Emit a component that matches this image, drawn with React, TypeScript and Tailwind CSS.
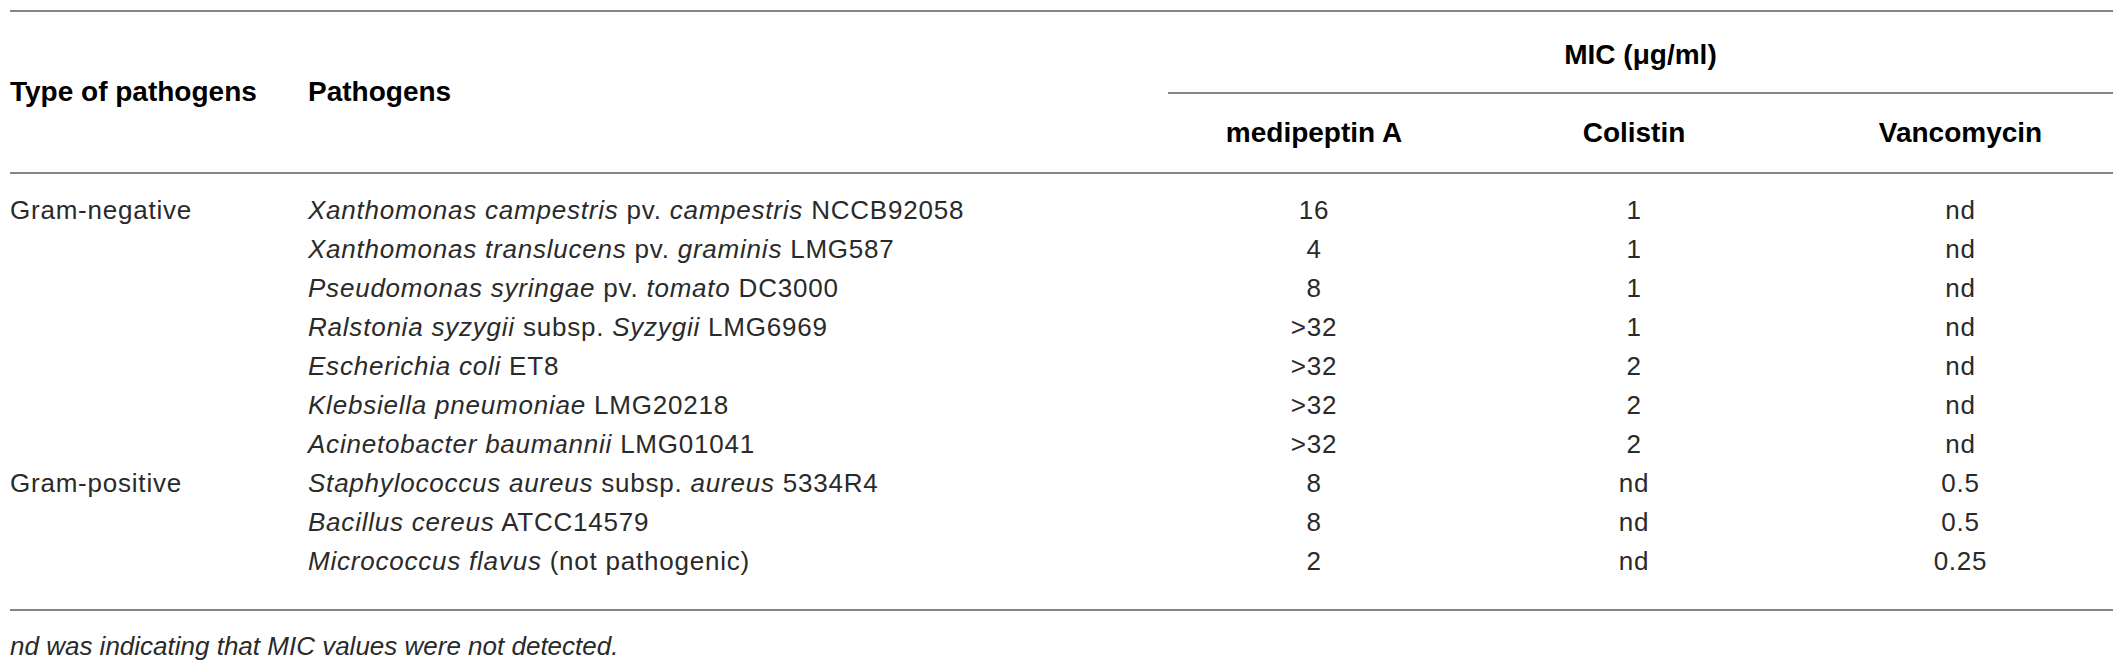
import React from 'react';

type Part = { t: string; i?: boolean };

const rows: { type?: string; name: Part[]; med: string; col: string; van: string }[] = [
  { type: 'Gram-negative', name: [{ t: 'Xanthomonas campestris', i: true }, { t: ' pv. ' }, { t: 'campestris', i: true }, { t: ' NCCB92058' }], med: '16', col: '1', van: 'nd' },
  { name: [{ t: 'Xanthomonas translucens', i: true }, { t: ' pv. ' }, { t: 'graminis', i: true }, { t: ' LMG587' }], med: '4', col: '1', van: 'nd' },
  { name: [{ t: 'Pseudomonas syringae', i: true }, { t: ' pv. ' }, { t: 'tomato', i: true }, { t: ' DC3000' }], med: '8', col: '1', van: 'nd' },
  { name: [{ t: 'Ralstonia syzygii', i: true }, { t: ' subsp. ' }, { t: 'Syzygii', i: true }, { t: ' LMG6969' }], med: '>32', col: '1', van: 'nd' },
  { name: [{ t: 'Escherichia coli', i: true }, { t: ' ET8' }], med: '>32', col: '2', van: 'nd' },
  { name: [{ t: 'Klebsiella pneumoniae', i: true }, { t: ' LMG20218' }], med: '>32', col: '2', van: 'nd' },
  { name: [{ t: 'Acinetobacter baumannii', i: true }, { t: ' LMG01041' }], med: '>32', col: '2', van: 'nd' },
  { type: 'Gram-positive', name: [{ t: 'Staphylococcus aureus', i: true }, { t: ' subsp. ' }, { t: 'aureus', i: true }, { t: ' 5334R4' }], med: '8', col: 'nd', van: '0.5' },
  { name: [{ t: 'Bacillus cereus', i: true }, { t: ' ATCC14579' }], med: '8', col: 'nd', van: '0.5' },
  { name: [{ t: 'Micrococcus flavus', i: true }, { t: ' (not pathogenic)' }], med: '2', col: 'nd', van: '0.25' },
];

export default function App() {
  return (
    <div className="w-[2126px] h-[668px] bg-white pl-[10px] pr-[13px] pt-[10px] text-[#2a2a2a] font-['Liberation_Sans',Arial,sans-serif]">
      <table className="w-full border-collapse text-[26px] leading-[30px] tracking-[0.03em]">
        <colgroup>
          <col className="w-[298px]" />
          <col className="w-[860px]" />
          <col className="w-[292px]" />
          <col className="w-[348px]" />
          <col className="w-[305px]" />
        </colgroup>
        <thead className="text-[28px] text-black tracking-normal">
          <tr className="h-[82px] border-t-2 border-[#858585]">
            <th rowSpan={2} className="text-left align-middle font-bold p-0 border-b-2 border-[#858585]">Type of pathogens</th>
            <th rowSpan={2} className="text-left align-middle font-bold p-0 border-b-2 border-[#858585]">Pathogens</th>
            <th colSpan={3} className="text-center align-middle font-bold p-0 pt-[6px] border-b-2 border-[#858585]">MIC (μg/ml)</th>
          </tr>
          <tr className="h-[80px]">
            <th className="text-center align-middle font-bold p-0 border-b-2 border-[#858585]">medipeptin A</th>
            <th className="text-center align-middle font-bold p-0 border-b-2 border-[#858585]">Colistin</th>
            <th className="text-center align-middle font-bold p-0 border-b-2 border-[#858585]">Vancomycin</th>
          </tr>
        </thead>
        <tbody className="border-b-2 border-[#858585]">
          <tr className="h-[17px]"><td colSpan={5} /></tr>
          {rows.map((r, i) => (
            <tr key={i} className="h-[39px]">
              <td className="p-0 align-middle">{r.type ?? ''}</td>
              <td className="p-0 align-middle">
                {r.name.map((p, j) => (p.i ? <i key={j}>{p.t}</i> : <span key={j}>{p.t}</span>))}
              </td>
              <td className="p-0 align-middle text-center">{r.med}</td>
              <td className="p-0 align-middle text-center">{r.col}</td>
              <td className="p-0 align-middle text-center">{r.van}</td>
            </tr>
          ))}
          <tr className="h-[30px]"><td colSpan={5} /></tr>
        </tbody>
      </table>
      <p className="mt-[20px] text-[26px] italic leading-[30px]">nd was indicating that MIC values were not detected.</p>
    </div>
  );
}
